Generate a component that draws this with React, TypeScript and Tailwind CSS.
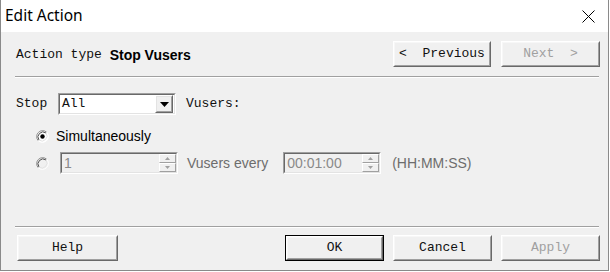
import React from "react";

const mono = "font-['Liberation_Mono',monospace] text-[13px]";
const sans = "font-['Liberation_Sans',Arial,sans-serif] text-[14px]";

function WinButton({
  children,
  disabled,
  isDefault,
  className = "",
}: {
  children: React.ReactNode;
  disabled?: boolean;
  isDefault?: boolean;
  className?: string;
}) {
  return (
    <div className={`h-[26px] bg-[#f0f0f0] ${isDefault ? "border border-black" : ""} ${className}`}>
      <div className="h-full w-full border border-t-white border-l-white border-r-[#696969] border-b-[#696969]">
        <div
          className={`flex h-full w-full items-center justify-center whitespace-pre border border-t-[#f7f7f7] border-l-[#f7f7f7] border-r-[#a0a0a0] border-b-[#a0a0a0] ${mono} ${
            disabled ? "text-[#a0a0a0]" : "text-[#111]"
          }`}
        >
          {children}
        </div>
      </div>
    </div>
  );
}

function Sunken({ children, className = "", white }: { children: React.ReactNode; className?: string; white?: boolean }) {
  return (
    <div className={`border border-t-[#a0a0a0] border-l-[#a0a0a0] border-r-white border-b-white ${className}`}>
      <div
        className={`flex h-full w-full items-center border border-t-[#696969] border-l-[#696969] border-r-[#e3e3e3] border-b-[#e3e3e3] ${
          white ? "bg-white" : "bg-[#f0f0f0]"
        }`}
      >
        {children}
      </div>
    </div>
  );
}

function SpinHalf({ up }: { up?: boolean }) {
  return (
    <div className="flex flex-1 items-center justify-center border border-t-white border-l-white border-r-[#a0a0a0] border-b-[#a0a0a0] bg-[#f0f0f0]">
      <svg width="5" height="3" viewBox="0 0 5 3">
        {up ? <path d="M2.5 0 L5 3 L0 3 Z" fill="#a0a0a0" /> : <path d="M0 0 L5 0 L2.5 3 Z" fill="#a0a0a0" />}
      </svg>
    </div>
  );
}

function Spin({ value, width }: { value: string; width: string }) {
  return (
    <Sunken className={`h-[22px] ${width}`}>
      <span className={`flex-1 pl-[2px] ${sans} text-[#8a8a8a]`}>{value}</span>
      <div className="flex h-full w-[17px] flex-col">
        <SpinHalf up />
        <SpinHalf />
      </div>
    </Sunken>
  );
}

function Radio({ checked, disabled }: { checked?: boolean; disabled?: boolean }) {
  return (
    <svg width="13" height="13" viewBox="0 0 13 13">
      <circle cx="6.5" cy="6.5" r="6" fill={disabled ? "#f0f0f0" : "#ffffff"} />
      <path d="M2.26 10.74 A6 6 0 0 1 10.74 2.26" stroke="#8c8c8c" fill="none" />
      <path d="M10.74 2.26 A6 6 0 0 1 2.26 10.74" stroke="#ffffff" fill="none" />
      <path d="M3 10 A5 5 0 0 1 10 3" stroke="#505050" fill="none" />
      <path d="M10 3 A5 5 0 0 1 3 10" stroke="#e3e3e3" fill="none" />
      {checked && <circle cx="6.5" cy="6.5" r="2.2" fill="#000" />}
    </svg>
  );
}

function Separator() {
  return (
    <div className="mr-[1px] ml-[-1px]">
      <div className="h-[1px] bg-[#a0a0a0]" />
      <div className="h-[1px] bg-white" />
    </div>
  );
}

export default function App() {
  return (
    <div className="flex h-[271px] w-[609px] flex-col border-x border-b border-[#8a8a8a] bg-[#f0f0f0]">
      {/* title bar */}
      <div className="flex h-[32px] items-center justify-between bg-white pl-[4px] pr-[13px]">
        <span className="font-['Noto_Sans',sans-serif] text-[15.5px] text-black">Edit Action</span>
        <svg width="13" height="13" viewBox="0 0 13 13">
          <path d="M0.5 0.5 L12.5 12.5 M12.5 0.5 L0.5 12.5" stroke="#000" strokeWidth="1" />
        </svg>
      </div>

      {/* body */}
      <div className="flex flex-1 flex-col pl-[15px] pr-[8px]">
        <div className="flex h-[44px] items-center pt-[2px]">
          <span className={`${mono} whitespace-pre text-[#111]`}>Action type </span>
          <span className={`${sans} font-bold text-black`}>Stop Vusers</span>
          <div className="ml-auto flex gap-[10px] pb-[2px]">
            <WinButton className="w-[98px]">{"<  Previous"}</WinButton>
            <WinButton className="w-[99px]" disabled>
              {"Next  >"}
            </WinButton>
          </div>
        </div>
        <Separator />

        <div className="mt-[15px] flex h-[22px] items-center">
          <span className={`${mono} w-[42px] text-[#111]`}>Stop</span>
          <Sunken className="h-[22px] w-[118px]" white>
            <span className={`${mono} flex-1 pl-[2px] text-[#111]`}>All</span>
            <div className="mr-[1px] h-[18px] w-[18px] border border-t-white border-l-white border-r-[#696969] border-b-[#696969] bg-[#f0f0f0]">
              <div className="flex h-full w-full items-center justify-center border border-t-[#e3e3e3] border-l-[#e3e3e3] border-r-[#a0a0a0] border-b-[#a0a0a0]">
                <svg width="9" height="5" viewBox="0 0 9 5">
                  <path d="M0 0 L9 0 L4.5 5 Z" fill="#000" />
                </svg>
              </div>
            </div>
          </Sunken>
          <span className={`${mono} ml-[10px] text-[#111]`}>Vusers:</span>
        </div>

        <div className="mt-[11px] flex h-[20px] items-center pl-[20px]">
          <Radio checked />
          <span className={`${sans} ml-[7px] text-black`}>Simultaneously</span>
        </div>

        <div className="mt-[6px] flex h-[22px] items-center pl-[20px]">
          <Radio disabled />
          <div className="ml-[11px]">
            <Spin value="1" width="w-[118px]" />
          </div>
          <span className={`${sans} ml-[9px] text-[#6d6d6d]`}>Vusers every</span>
          <div className="ml-[15px]">
            <Spin value="00:01:00" width="w-[98px]" />
          </div>
          <span className={`${sans} ml-[11px] text-[#6d6d6d]`}>(HH:MM:SS)</span>
        </div>

        <div className="mt-[52px]">
          <Separator />
        </div>

        <div className="mt-[7px] flex items-center">
          <WinButton className="ml-[1px] w-[101px]">Help</WinButton>
          <div className="ml-auto flex gap-[9px]">
            <WinButton className="w-[99px]" isDefault>
              OK
            </WinButton>
            <WinButton className="w-[99px]">Cancel</WinButton>
            <WinButton className="w-[99px]" disabled>
              Apply
            </WinButton>
          </div>
        </div>
      </div>
    </div>
  );
}
